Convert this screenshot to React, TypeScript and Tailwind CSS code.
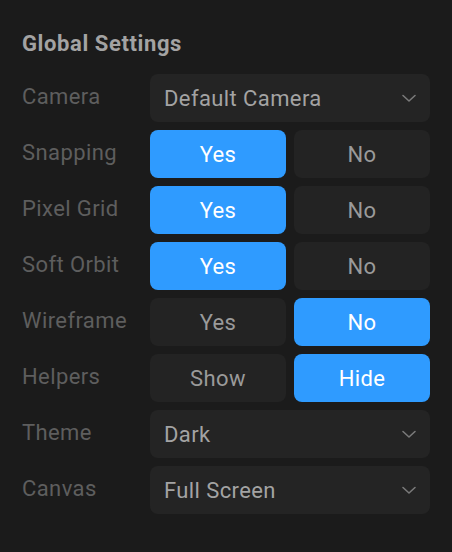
import React from "react";

const Chevron = () => (
  <svg width="16" height="10" viewBox="0 0 16 10" fill="none" className="shrink-0">
    <path d="M2 2.5 L8 8 L14 2.5" stroke="#7a7a7a" strokeWidth="1.6" strokeLinecap="round" strokeLinejoin="round" />
  </svg>
);

const Select = ({ value }: { value: string }) => (
  <div className="flex h-12 items-center justify-between rounded-lg bg-[#242424] pl-[14px] pr-[13px] text-[22px] tracking-[0.4px] text-[#a3a3a3]">
    <span>{value}</span>
    <Chevron />
  </div>
);

const Toggle = ({ a, b, active }: { a: string; b: string; active: 0 | 1 }) => (
  <div className="grid grid-cols-2 gap-2">
    {[a, b].map((t, i) => (
      <div
        key={t}
        className={
          i === active
            ? "flex h-12 items-center justify-center rounded-lg bg-[#2f9bff] text-[22px] tracking-[0.4px] text-white"
            : "flex h-12 items-center justify-center rounded-lg bg-[#232323] text-[22px] tracking-[0.4px] text-[#9a9a9a]"
        }
      >
        {t}
      </div>
    ))}
  </div>
);

const Row = ({ label, children }: { label: string; children: React.ReactNode }) => (
  <div className="grid grid-cols-[128px_280px] items-center">
    <div className="text-[22px] tracking-[0.4px] text-[#5e5e5e] -mt-[4px]">{label}</div>
    {children}
  </div>
);

export default function App() {
  return (
    <div
      className="h-[552px] w-[452px] bg-[#1b1b1b] pl-[22px] pt-[28px]"
      style={{ fontFamily: "Roboto, 'Noto Sans', sans-serif" }}
    >
      <h1 className="text-[22px] font-bold leading-[32px] text-[#a3a3a3] tracking-[0.6px]">Global Settings</h1>
      <div className="mt-[14px] flex flex-col gap-2">
        <Row label="Camera"><Select value="Default Camera" /></Row>
        <Row label="Snapping"><Toggle a="Yes" b="No" active={0} /></Row>
        <Row label="Pixel Grid"><Toggle a="Yes" b="No" active={0} /></Row>
        <Row label="Soft Orbit"><Toggle a="Yes" b="No" active={0} /></Row>
        <Row label="Wireframe"><Toggle a="Yes" b="No" active={1} /></Row>
        <Row label="Helpers"><Toggle a="Show" b="Hide" active={1} /></Row>
        <Row label="Theme"><Select value="Dark" /></Row>
        <Row label="Canvas"><Select value="Full Screen" /></Row>
      </div>
    </div>
  );
}
